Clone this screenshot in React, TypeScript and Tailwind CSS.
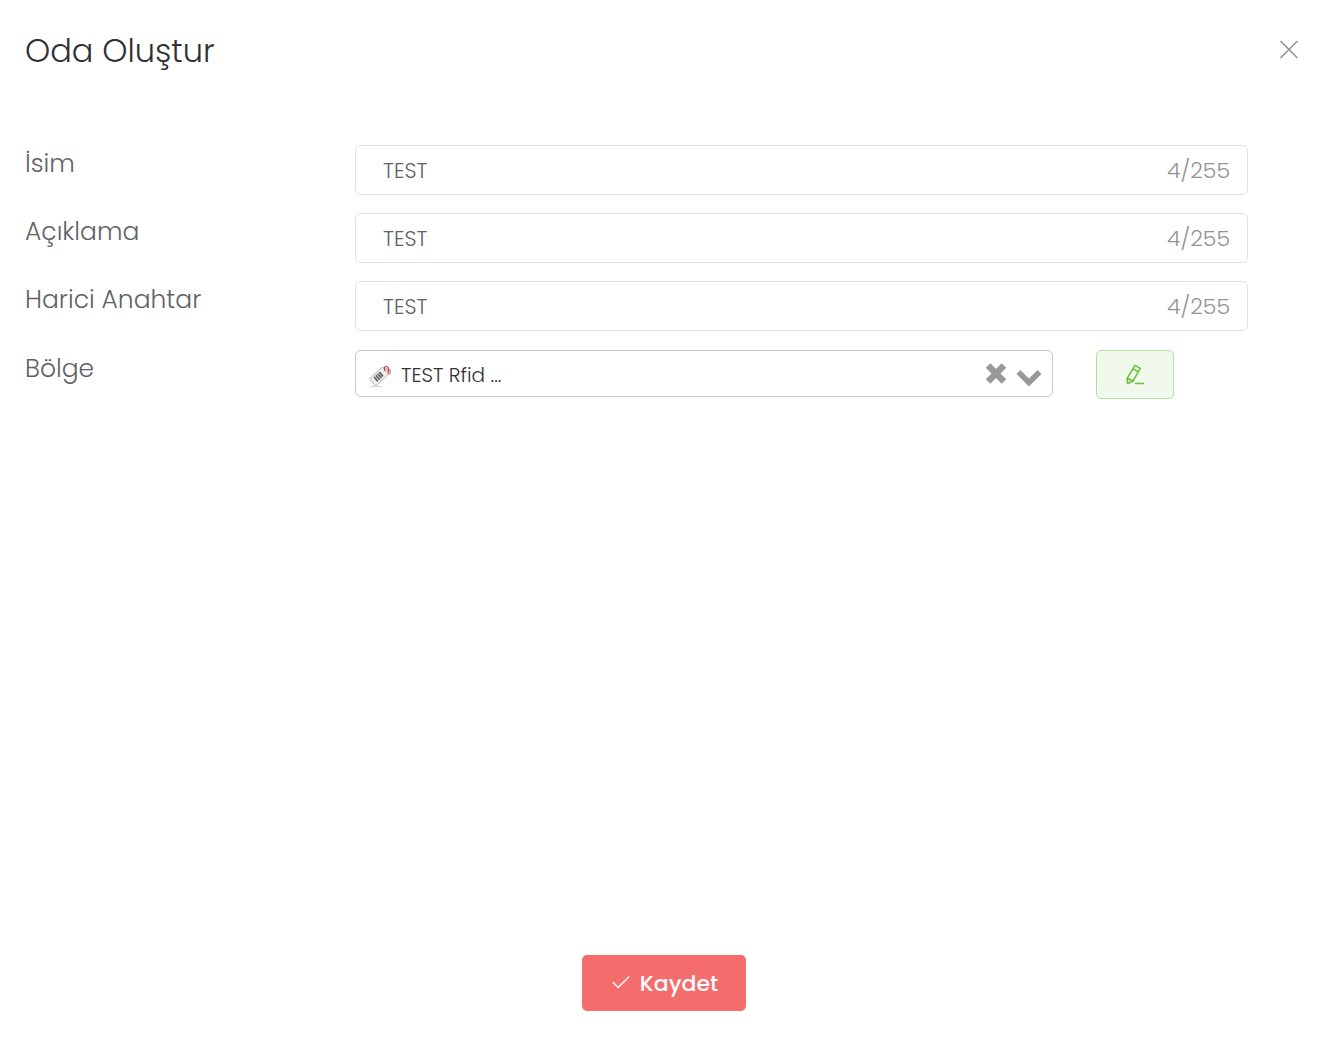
import { useState } from "react";

function TextField({ id, label }: { id: string; label: string }) {
  const [value, setValue] = useState("TEST");
  return (
    <div className="flex items-start">
      <label htmlFor={id} className="w-[330px] shrink-0 text-[25px] leading-[38px] text-[#606266]">
        {label}
      </label>
      <div className="flex h-[50px] min-w-0 flex-1 items-center rounded-md border border-[#dcdfe6] bg-white pl-[27px] pr-[17px] focus-within:border-blue-400">
        <input
          id={id}
          type="text"
          maxLength={255}
          value={value}
          onChange={(e) => setValue(e.target.value)}
          className="h-12 min-w-0 flex-1 bg-transparent pt-px text-[21px] text-[#606266] outline-none"
        />
        <span className="text-[22px] text-[#909399]">{value.length}/255</span>
      </div>
    </div>
  );
}

function TagIcon() {
  return (
    <svg viewBox="0 0 24 24" className="pointer-events-none absolute left-[13px] top-[14px] size-6" aria-hidden="true">
      <ellipse cx="8" cy="22.4" rx="6" ry="0.7" fill="#d4d2d0" />
      <path d="M2 14 13.600 3.600l5 .8 1.600 6L8.600 21.200c-.6.5-1.200.5-1.700 0L2 15.500c-.4-.5-.4-1 0-1.500Z" fill="#f2f0ed" stroke="#a8a39c" strokeWidth="0.8" />
      <path d="m6 12.800 3.800 4.600M7.900 11.100l3.800 4.600M9.700 9.500l3.800 4.600M11.400 8l3.600 4.400" stroke="#66666b" strokeWidth="1.800" />
      <path d="M17.500 7.500c-2-2.800-1.500-5 .6-5 2 0 2.500 2 2.300 4.500" fill="none" stroke="#b33a44" strokeWidth="1.200" />
      <path d="M19.800 4.500 22 6v4M20.500 7v3.500" fill="none" stroke="#d9626c" strokeWidth="1.100" />
    </svg>
  );
}

export default function App() {
  const [zone, setZone] = useState("rfid");
  return (
    <div className="flex min-h-screen flex-col bg-white pb-[43px] font-['Poppins','Inter',sans-serif] font-light">
      <header className="flex h-[100px] items-center justify-between pl-[25px] pr-[31px]">
        <h1 className="pt-0.5 text-[32px] leading-[48px] text-[#303133]">Oda Oluştur</h1>
        <button type="button" aria-label="Kapat" className="text-[#909399]">
          <svg viewBox="0 0 20 20" className="size-5" fill="none" stroke="currentColor" strokeWidth="1.600">
            <path d="M1.500 1l17 17M18.500 1l-17 17" />
          </svg>
        </button>
      </header>

      <form className="flex flex-1 flex-col pt-[45px]" onSubmit={(e) => e.preventDefault()}>
        <div className="flex flex-col gap-[18px] pl-[25px] pr-[82px]">
          <TextField id="name" label="İsim" />
          <TextField id="description" label="Açıklama" />
          <TextField id="external-key" label="Harici Anahtar" />
          <div className="flex items-start pt-px">
            <label htmlFor="zone" className="w-[330px] shrink-0 text-[25px] leading-[38px] text-[#606266]">
              Bölge
            </label>
            <div className="flex min-w-0 flex-1 items-start pr-[74px]">
              <div className="relative min-w-0 flex-1">
                <select
                  id="zone"
                  value={zone}
                  onChange={(e) => setZone(e.target.value)}
                  className="h-[47px] w-full appearance-none rounded-md border border-[#c8c8c8] bg-white pl-[45px] pr-[75px] pt-[3px] text-[20px] text-[#333333] outline-none"
                >
                  <option value="" />
                  <option value="rfid">TEST Rfid ...</option>
                </select>
                {zone && <TagIcon />}
                <button
                  type="button"
                  aria-label="Temizle"
                  onClick={() => setZone("")}
                  className="absolute right-[46px] top-3 text-[#999999]"
                >
                  <svg viewBox="0 0 22 22" className="size-[22px]" fill="none" stroke="currentColor" strokeWidth="6.500">
                    <path d="M3 3.500l16 16M19 3.500L3 19.500" />
                  </svg>
                </button>
                <svg
                  viewBox="0 0 26 18"
                  className="pointer-events-none absolute right-[11px] top-[19px] h-[18px] w-[26px] text-[#999999]"
                  fill="none"
                  stroke="currentColor"
                  strokeWidth="5.500"
                  aria-hidden="true"
                >
                  <path d="M2.500 3 13 13.500 23.500 3" />
                </svg>
              </div>
              <button
                type="button"
                aria-label="Düzenle"
                className="ml-[43px] flex h-[49px] w-[78px] shrink-0 items-center justify-center rounded-[5px] border border-[#b3e19d] bg-[#f0f9eb] text-[#67c23a]"
              >
                <svg viewBox="0 0 20 22" className="h-[22px] w-5" fill="none" stroke="currentColor" strokeWidth="1.500" strokeLinejoin="round">
                  <path d="M10 1.300 15.300 4.300 7.800 17.300 2.600 19.500 2 14.600Z" />
                  <path d="M8 4.700l5.400 3.100M2 14.600c1.300-.4 2 .2 2.200 1.400 1.300-.4 2.900 0 3.600 1.300" />
                  <path d="M10 19.500h9" />
                </svg>
              </button>
            </div>
          </div>
        </div>

        <button
          type="submit"
          className="mt-auto mr-0.5 flex h-14 w-[164px] items-center justify-center gap-2.5 self-center rounded-[5px] bg-[#f56c6c] pl-0.5 text-[22px] font-medium text-white"
        >
          <svg viewBox="0 0 18 14" className="h-3.5 w-[18px]" fill="none" stroke="currentColor" strokeWidth="1.400" aria-hidden="true">
            <path d="M.8 6 6.200 11.500 17.200 .5" />
          </svg>
          Kaydet
        </button>
      </form>
    </div>
  );
}
